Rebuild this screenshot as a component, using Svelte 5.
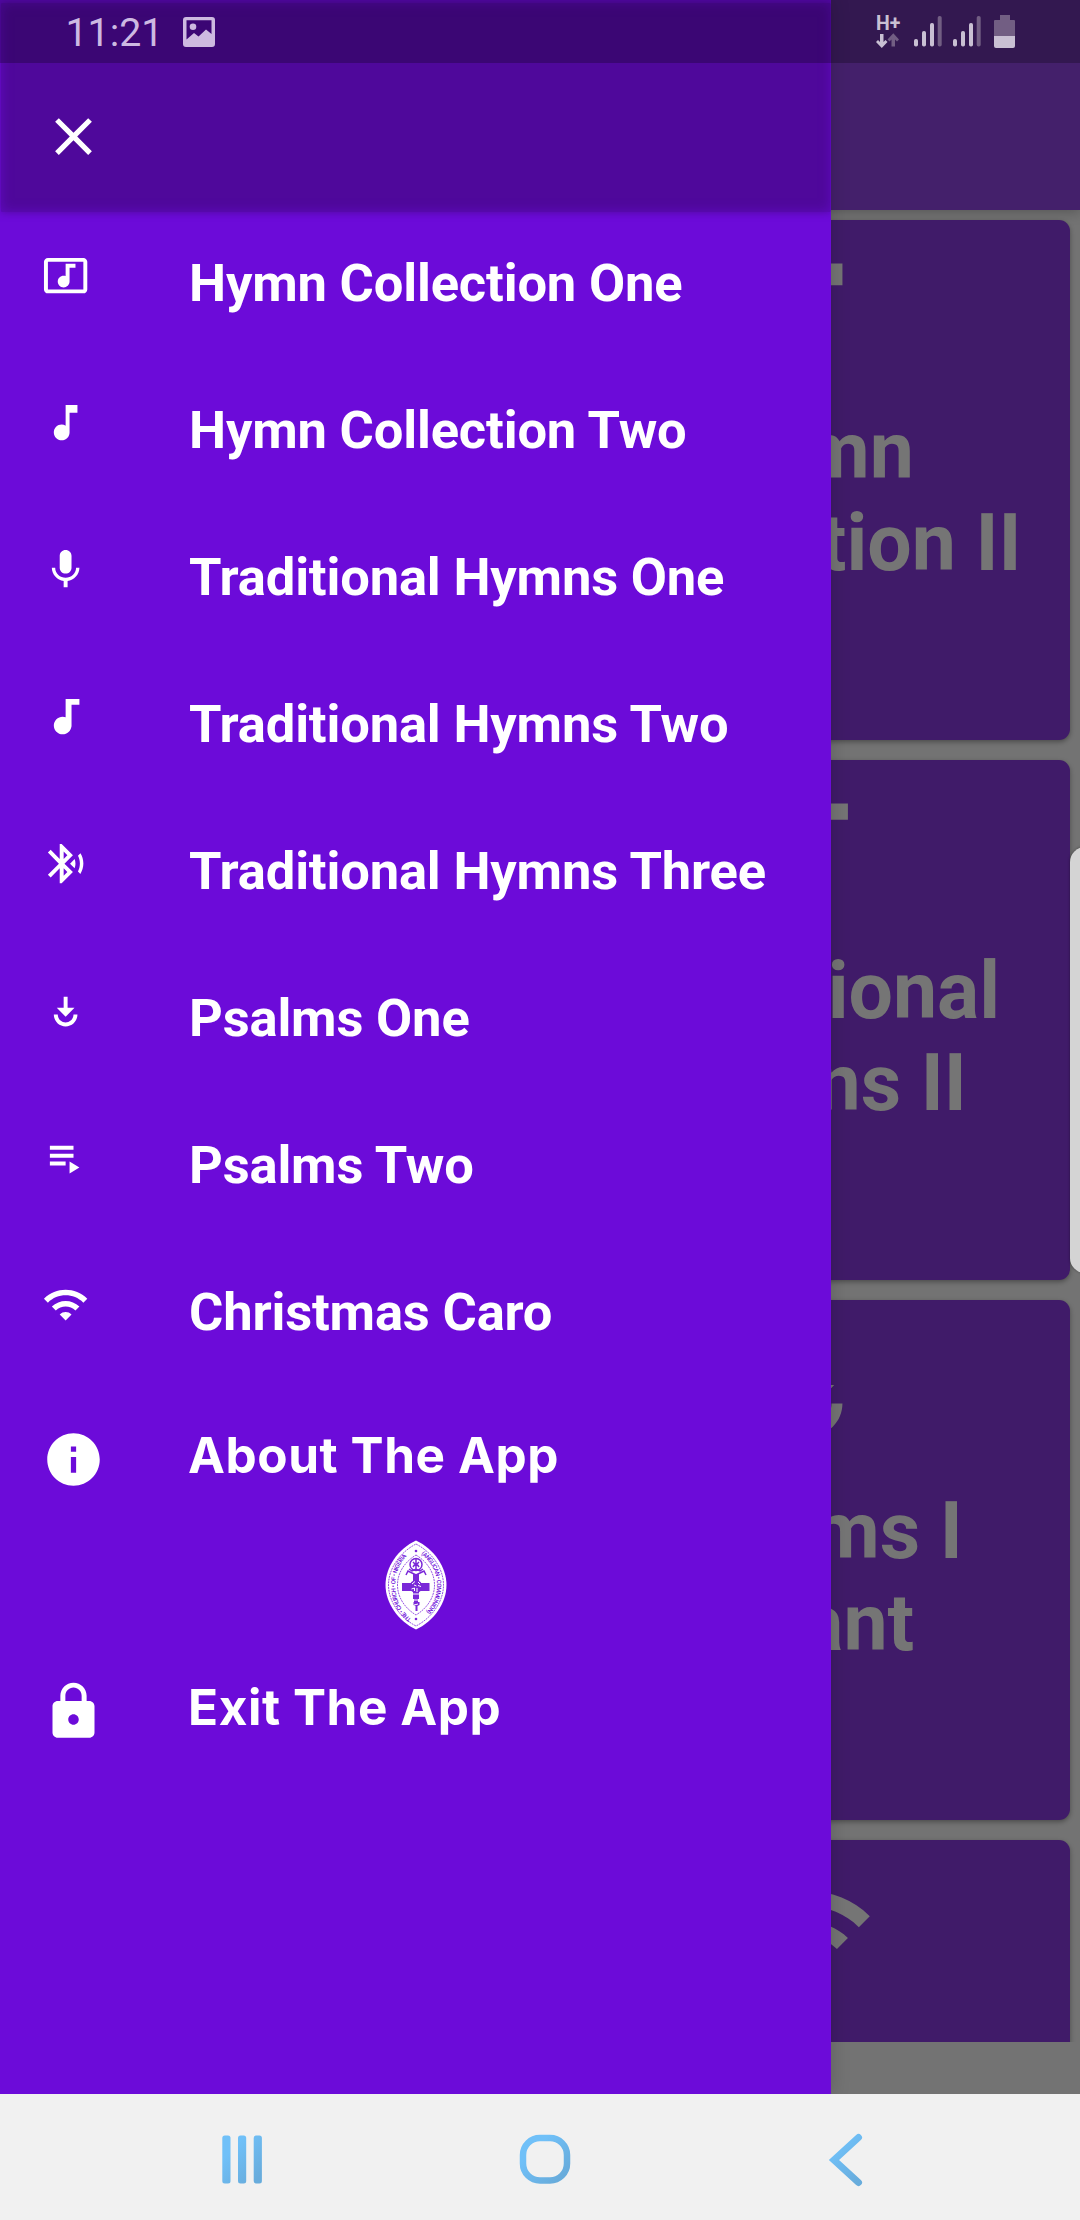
<script>
  const icons = {
    video: 'M21 3H3c-1.1 0-2 .9-2 2v14c0 1.1.9 2 2 2h18c1.1 0 2-.9 2-2V5c0-1.1-.9-2-2-2zm0 16H3V5h18v14zM8 15c0-1.66 1.34-3 3-3 .35 0 .69.07 1 .18V6h5v2h-3v7.03c-.02 1.64-1.35 2.97-3 2.97-1.66 0-3-1.34-3-3z',
    note: 'M12 3v10.55c-.59-.34-1.27-.55-2-.55-2.21 0-4 1.79-4 4s1.79 4 4 4 4-1.79 4-4V7h4V3h-6z',
    mic: 'M12 14c1.66 0 2.99-1.34 2.99-3L15 5c0-1.66-1.34-3-3-3S9 3.34 9 5v6c0 1.66 1.34 3 3 3zm5.3-3c0 3-2.54 5.1-5.3 5.1S6.7 14 6.7 11H5c0 3.41 2.72 6.23 6 6.72V21h2v-3.28c3.28-.48 6-3.3 6-6.72h-1.7z',
    track: 'M12 3v9.28c-.47-.17-.97-.28-1.5-.28C8.01 12 6 14.01 6 16.5S8.01 21 10.5 21c2.31 0 4.2-1.75 4.45-4H15V6h4V3h-7z',
    bluetooth: 'M14.24 12.01l2.32 2.32c.28-.72.44-1.51.44-2.33 0-.82-.16-1.59-.43-2.31l-2.33 2.32zm5.29-5.3l-1.26 1.26c.63 1.21.98 2.57.98 4.02s-.36 2.82-.98 4.02l1.2 1.2c.97-1.54 1.54-3.36 1.54-5.31-.01-1.89-.55-3.67-1.48-5.19zm-3.82 1L10 2H9v7.59L4.41 5 3 6.41 8.59 12 3 17.59 4.41 19 9 14.41V22h1l5.71-5.71-4.3-4.29 4.3-4.29zM11 5.83l1.88 1.88L11 9.59V5.83zm1.88 10.46L11 18.17v-3.76l1.88 1.88z',
    work: 'M11 5v5.59H7.5l4.5 4.5 4.5-4.5H13V5h-2zm-5 9c0 3.31 2.69 6 6 6s6-2.69 6-6h-2c0 2.21-1.79 4-4 4s-4-1.79-4-4H6z',
    playlist: 'M4 10h12v2H4zM4 6h12v2H4zM4 14h8v2H4zM14 14v6l5-3z',
    wifi: 'M1 9l2 2c4.97-4.97 13.03-4.97 18 0l2-2C16.93 2.93 7.08 2.93 1 9zm8 8l3 3 3-3c-1.65-1.66-4.34-1.66-6 0zm-4-4l2 2c2.76-2.76 7.24-2.76 10 0l2-2C15.14 9.14 8.87 9.14 5 13z',
    close: 'M19 6.41L17.59 5 12 10.59 6.41 5 5 6.41 10.59 12 5 17.59 6.41 19 12 13.41 17.59 19 19 17.59 13.41 12z',
    info: 'M12 2C6.48 2 2 6.48 2 12s4.48 10 10 10 10-4.48 10-10S17.52 2 12 2zm1 15h-2v-6h2v6zm0-8h-2V7h2v2z',
    lock: 'M18 8h-1V6c0-2.76-2.24-5-5-5S7 3.24 7 6v2H6c-1.1 0-2 .9-2 2v10c0 1.1.9 2 2 2h12c1.1 0 2-.9 2-2V10c0-1.1-.9-2-2-2zm-6 9c-1.1 0-2-.9-2-2s.9-2 2-2 2 .9 2 2-.9 2-2 2zm3.1-9H8.9V6c0-1.71 1.39-3.1 3.1-3.1 1.71 0 3.1 1.39 3.1 3.1v2z'
  };

  const items = [
    { icon: 'video', label: 'Hymn Collection One' },
    { icon: 'note', label: 'Hymn Collection Two' },
    { icon: 'mic', label: 'Traditional Hymns One' },
    { icon: 'track', label: 'Traditional Hymns Two' },
    { icon: 'bluetooth', label: 'Traditional Hymns Three' },
    { icon: 'work', label: 'Psalms One' },
    { icon: 'playlist', label: 'Psalms Two' },
    { icon: 'wifi', label: 'Christmas Caro' }
  ];

  const cards = [
    { icon: 'note', lines: ['Hymn', 'Collection II'] },
    { icon: 'track', lines: ['Traditional', 'Hymns II'] },
    { icon: 'work', lines: ['Psalms I', 'Chant'] },
    { icon: 'wifi', lines: [] }
  ];
</script>

{#snippet icon(name)}
  <svg class="icon" viewBox="0 0 24 24" aria-hidden="true"><path d={icons[name]} /></svg>
{/snippet}

{#snippet signal()}
  <svg class="signal" viewBox="0 0 28 31" aria-hidden="true">
    <rect x="0" y="23" width="4" height="7.5" rx="1.8" />
    <rect x="8" y="15" width="4" height="15.5" rx="1.8" />
    <rect x="16" y="7" width="4" height="23.5" rx="1.8" />
    <rect class="dim" x="23.7" y="0" width="4" height="30.5" rx="1.8" />
  </svg>
{/snippet}

<div class="screen">
  <main class="page">
    <div class="toolbar"></div>
    <div class="cards">
      {#each cards as card}
        <article class="card">
          {@render icon(card.icon)}
          <div class="title">
            {#each card.lines as line}<div>{line}</div>{/each}
          </div>
        </article>
      {/each}
    </div>
  </main>

  <div class="edge"></div>

  <aside class="drawer">
    <header class="head">
      <div class="shade"></div>
      <button class="close" aria-label="Close">{@render icon('close')}</button>
    </header>
    <nav class="menu">
      {#each items as item}
        <a class="row" href="#top">{@render icon(item.icon)}<span>{item.label}</span></a>
      {/each}
      <a class="row big" href="#top">{@render icon('info')}<span>About The App</span></a>
      <svg class="seal" viewBox="0 0 62 90" role="img" aria-label="Church seal">
        <path class="body" d="M31 0.5C49 9 61.5 27 61.5 45S49 81 31 89.5C13 81 .5 63 .5 45S13 9 31 .5z" />
        <path class="line" d="M31 4C46.500 12 58.500 28 58.500 45S46.500 78 31 86C15.500 78 3.500 62 3.500 45S15.500 12 31 4z" />
        <path class="line" d="M31 15C42.500 22 49.500 33 49.500 45S42.500 68 31 75C19.500 68 12.500 57 12.500 45S19.500 22 31 15z" />
        <path id="ringLeft" class="guide" d="M27.500 79.500C15 71 10.300 58 10.300 45S16 19 27 11.500" />
        <path id="ringRight" class="guide" d="M35 13.500C47 22 52 33 52 45S47 68 35 77.500" />
        <text class="ring"><textPath href="#ringLeft" startOffset="1" textLength="71">THE • CHURCH • OF • NIGERIA</textPath></text>
        <text class="ring"><textPath href="#ringRight" startOffset="1" textLength="66">(ANGLICAN • COMMUNION)</textPath></text>
        <circle class="ink" cx="31" cy="11" r="1.300" />
        <circle class="ink" cx="31" cy="79" r="1.300" />
        <circle class="stroke" cx="31" cy="24.500" r="6" />
        <path class="stroke" d="M31 19v11M28 22l2 2-2 3M34 22l-2 2 2 3M24 29l3 2 4-2 4 2 3-2M21 35l2-4 4 2M41 35l-2-4-4 2M27 33l4 2 4-2" />
        <path class="ink" d="M28 34h6v9h10.500v8H34v8h-1v3h1.500v3l-2 1v5h-2v-5l-2-1v-3H29v-3h-1v-8H17v-8h11z" />
        <circle class="ink" cx="31" cy="46.500" r="6.500" />
        <path class="white" d="M27 44l3-2.500M33 42l2 2M26.500 49l3-1v3M33 45.500l3 1M32 48v4M29 45l2.500 1M28 54h6M28 60h6M29 65l4-1" />
      </svg>
      <a class="row big exit" href="#top">{@render icon('lock')}<span>Exit The App</span></a>
    </nav>
  </aside>

  <div class="status">
    <span class="time">11:21</span>
    <svg class="photo" viewBox="0 0 32 30" aria-hidden="true">
      <path fill-rule="evenodd" d="M3 0h26a3 3 0 0 1 3 3v24a3 3 0 0 1-3 3H3a3 3 0 0 1-3-3V3a3 3 0 0 1 3-3zM3.500 3.200V22.500L11 16l4.500 3.500L23 12.500l5.500 4.500V3.200z" />
      <circle cx="10" cy="9.700" r="3.300" />
    </svg>
    <div class="network">
      <span>H+</span>
      <svg viewBox="0 0 24 16" aria-hidden="true">
        <path d="M4 1h3.500v8l2-2 2 2-5.700 6L0 9l2-2 2 2z" />
        <path class="dim" d="M15.500 13.500v-7l-2 2-2-2L17.300.3 23 6.500l-2 2-2-2v7z" />
      </svg>
    </div>
    {@render signal()}
    {@render signal()}
    <svg class="battery" viewBox="0 0 21 33" aria-hidden="true">
      <path class="dim" d="M6 0h10v5h4a1 1 0 0 1 1 1v15H0V6a1 1 0 0 1 1-1h5z" />
      <path d="M0 21h21v10a2 2 0 0 1-2 2H2a2 2 0 0 1-2-2z" />
    </svg>
  </div>

  <footer class="navbar">
    <svg viewBox="0 0 54 54" aria-hidden="true">
      <defs>
        <linearGradient id="sky" x1="0" y1="0" x2="54" y2="54" gradientUnits="userSpaceOnUse">
          <stop offset="0.3" stop-color="#70c0f8" /><stop offset="0.8" stop-color="#68acdc" />
        </linearGradient>
      </defs>
      <g class="bars">
        <rect x="6.300" y="2.500" width="8.200" height="48" rx="2.500" />
        <rect x="22" y="2.500" width="8.200" height="48" rx="2.500" />
        <rect x="37.700" y="2.500" width="8.200" height="48" rx="2.500" />
      </g>
    </svg>
    <svg viewBox="0 0 54 54" aria-hidden="true">
      <rect class="home" x="5" y="5" width="44" height="42.500" rx="17" />
    </svg>
    <svg viewBox="0 0 54 54" aria-hidden="true">
      <path class="back" d="M39.500 4.500L15 27l24.500 22.500" />
    </svg>
  </footer>
</div>

<style>
  :global(body) { margin: 0; }
  .screen {
    position: relative;
    width: 1080px;
    height: 2220px;
    display: flex;
    flex-direction: column;
    overflow: hidden;
    background: #737373;
    font-family: Roboto, "Liberation Sans", sans-serif;
  }
  .icon { display: block; flex: none; fill: currentColor; }

  /* dimmed page behind the drawer */
  .page { height: 2042px; overflow: hidden; display: flex; flex-direction: column; }
  .toolbar {
    flex: none;
    height: 210px;
    background: #44206b;
    box-shadow: 0 2px 12px rgba(0, 0, 0, 0.25);
  }
  .cards { display: flex; flex-direction: column; align-items: flex-end; gap: 20px; padding: 10px 10px 0; }
  .card {
    flex: none;
    box-sizing: border-box;
    width: 520px;
    height: 520px;
    padding-top: 26.500px;
    border-radius: 11px;
    background: #401b69;
    box-shadow: 0 2px 5px rgba(0, 0, 0, 0.35);
    color: #757575;
    display: flex;
    flex-direction: column;
    align-items: center;
    gap: 27px;
  }
  .card .icon { width: 131.250px; height: 131.250px; }
  .title { font-size: 78.750px; line-height: 92px; font-weight: 700; text-align: center; white-space: nowrap; }

  .edge {
    position: absolute;
    left: 1070px;
    top: 847px;
    width: 30px;
    height: 426px;
    border-radius: 15px;
    background: #d4d4d4;
    box-shadow: 0 0 3px rgba(0, 0, 0, 0.4);
  }

  .drawer {
    position: absolute;
    left: 0;
    top: 0;
    width: 830.500px;
    height: 2094px;
    background: #6c0bd9;
    box-shadow: 0 0 18px rgba(0, 0, 0, 0.18);
    color: #fff;
  }
  .head {
    position: relative;
    box-sizing: border-box;
    height: 210px;
    padding: 105px 42px 0;
    clip-path: inset(0 0 -30px 0);
  }
  .shade {
    position: absolute;
    inset: 3px 0 -2px 1px;
    border-radius: 2px;
    background: #4f089b;
    box-shadow: 0 0 9px #4f089b, inset 0 0 12px rgba(107, 11, 216, 0.6);
  }
  .close { position: relative; display: block; padding: 0; border: 0; background: none; color: #fff; }
  .close .icon { width: 63px; height: 63px; }

  .menu { display: flex; flex-direction: column; }
  .row {
    box-sizing: border-box;
    height: 147px;
    padding: 42px 0 0 42px;
    display: grid;
    grid-template-columns: 147px 1fr;
    align-items: start;
    color: #fff;
    text-decoration: none;
    font-size: 52.500px;
    line-height: 63.500px;
    letter-spacing: -0.170px;
    font-weight: 700;
    white-space: nowrap;
  }
  .row .icon { width: 47.250px; height: 47.250px; }
  .row.big {
    grid-template-columns: 146px 1fr;
    font-family: Inter, "Liberation Sans", sans-serif;
    font-size: 49.500px;
    line-height: 55.500px;
    letter-spacing: 0.570px;
  }
  .row.big .icon { width: 63px; height: 63px; }
  .row.exit { margin-top: 8px; }

  .seal { width: 62px; height: 90px; margin: 6.500px 0 0 384.500px; }
  .seal .body { fill: #fff; }
  .seal .line { fill: none; stroke: #6c0bd9; stroke-width: 0.7; stroke-dasharray: 2 0.8; }
  .seal .guide { fill: none; }
  .seal .ink { fill: #7a28d8; }
  .seal .stroke { fill: none; stroke: #7a28d8; stroke-width: 1.5; }
  .seal .white { fill: none; stroke: #fff; stroke-width: 1; }
  .ring { font: 500 6px Roboto, sans-serif; letter-spacing: 0; fill: #6c0bd9; }

  .status {
    position: absolute;
    left: 0;
    top: 0;
    box-sizing: border-box;
    width: 1080px;
    height: 63px;
    padding: 0 65px 0 65.500px;
    display: flex;
    align-items: center;
    background: rgba(0, 0, 0, 0.25);
    color: #cabfda;
    fill: #c9c0d3;
  }
  .time { width: 117.500px; font-size: 39.300px; line-height: 46px; margin-top: 3px; color: #cdb9e2; }
  .photo { width: 32px; height: 30px; fill: #cdb9e0; margin-right: auto; }
  .network { width: 24px; margin-right: 14px; display: flex; flex-direction: column; }
  .network span { font-size: 19.500px; line-height: 18px; font-weight: 700; color: #c9c0d3; }
  .network svg { width: 24px; height: 16px; }
  .signal { width: 28px; height: 31px; margin-right: 11px; }
  .battery { width: 21px; height: 33px; margin-left: 2px; }
  .dim { fill: #725e83; }

  .navbar {
    margin-top: 52px;
    height: 126px;
    background: #f1f1f1;
    display: flex;
    justify-content: space-between;
    align-items: center;
    padding: 6px 207px 0 216px;
    box-sizing: border-box;
    position: relative;
  }
  .navbar svg { width: 54px; height: 54px; }
  .bars { fill: url(#sky); }
  .home { fill: none; stroke: url(#sky); stroke-width: 6.500; }
  .back { fill: none; stroke: url(#sky); stroke-width: 7; stroke-linecap: round; }
</style>
